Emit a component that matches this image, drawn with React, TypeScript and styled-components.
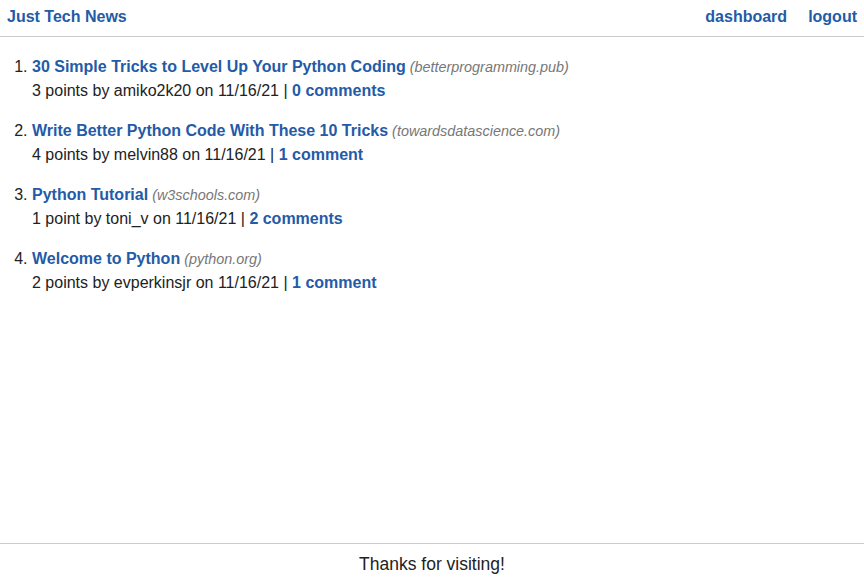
import React from "react";
import styled, { createGlobalStyle } from "styled-components";

const Global = createGlobalStyle`
  html, body { margin: 0; padding: 0; background: #fff; }
  body { font-family: "Liberation Sans", Arial, Helvetica, sans-serif; color: #222; font-size: 16px; }
  a { color: #245ba7; text-decoration: none; font-weight: bold; }
`;

const Page = styled.div`
  min-height: 100vh;
  display: flex;
  flex-direction: column;
`;

const Header = styled.header`
  height: 37px;
  box-sizing: border-box;
  border-bottom: 1px solid #ccc;
  display: flex;
  align-items: center;
  justify-content: space-between;
  padding: 0 7px 3px 7px;
`;

const Brand = styled.a`
  font-size: 16px;
`;

const Nav = styled.nav`
  display: flex;
  gap: 21px;
  font-size: 16px;
`;

const Main = styled.main`
  flex: 1;
`;

const List = styled.ol`
  margin: 18px 0 0 0;
  padding: 0 0 0 32px;
`;

const Item = styled.li`
  line-height: 24px;
  margin-bottom: 16px;
`;

const Domain = styled.span`
  font-style: italic;
  color: #777;
  font-size: 14.4px;
  margin-left: 4px;
`;

const Meta = styled.div`
  font-size: 16px;
`;

const Footer = styled.footer`
  border-top: 1px solid #ccc;
  height: 37px;
  box-sizing: border-box;
  display: flex;
  align-items: center;
  justify-content: center;
  font-size: 17.5px;
  padding-top: 4px;
`;

const posts = [
  { title: "30 Simple Tricks to Level Up Your Python Coding", domain: "betterprogramming.pub", points: "3 points", user: "amiko2k20", comments: "0 comments" },
  { title: "Write Better Python Code With These 10 Tricks", domain: "towardsdatascience.com", points: "4 points", user: "melvin88", comments: "1 comment" },
  { title: "Python Tutorial", domain: "w3schools.com", points: "1 point", user: "toni_v", comments: "2 comments" },
  { title: "Welcome to Python", domain: "python.org", points: "2 points", user: "evperkinsjr", comments: "1 comment" },
];

export default function App() {
  return (
    <Page>
      <Global />
      <Header>
        <Brand href="#">Just Tech News</Brand>
        <Nav>
          <a href="#">dashboard</a>
          <a href="#">logout</a>
        </Nav>
      </Header>
      <Main>
        <List>
          {posts.map((p) => (
            <Item key={p.title}>
              <a href="#">{p.title}</a>
              <Domain>({p.domain})</Domain>
              <Meta>
                {p.points} by {p.user} on 11/16/21 | <a href="#">{p.comments}</a>
              </Meta>
            </Item>
          ))}
        </List>
      </Main>
      <Footer>Thanks for visiting!</Footer>
    </Page>
  );
}
